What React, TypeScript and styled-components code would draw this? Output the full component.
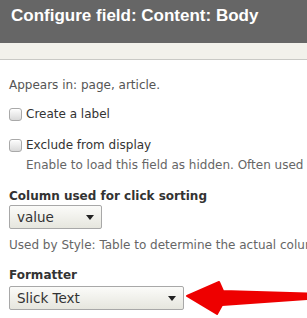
import React from "react";
import styled, { createGlobalStyle } from "styled-components";

const GlobalStyle = createGlobalStyle`
  html, body {
    margin: 0;
    padding: 0;
    background: #fff;
    overflow: hidden;
  }
  body {
    font-family: "DejaVu Sans", Verdana, sans-serif;
  }
`;

const Page = styled.div`
  position: relative;
  width: 307px;
  height: 318px;
  overflow: hidden;
  background: #fff;
`;

const Header = styled.header`
  height: 43px;
  background: #666666;
  padding: 6px 0 0 11px;
  box-sizing: border-box;
`;

const Title = styled.h1`
  margin: 0;
  font-family: "Liberation Sans", Arial, sans-serif;
  font-weight: bold;
  font-size: 17px;
  line-height: 20px;
  color: #fff;
  white-space: nowrap;
`;

const Strip = styled.div`
  height: 16px;
  background: #f2f1eb;
  border-bottom: 1px solid #c9c9c5;
`;

const Main = styled.main`
  padding: 17px 0 0 9px;
  white-space: nowrap;
`;

const Text = styled.p<{ $top: number; $indent?: number; $color?: string }>`
  margin: ${p => p.$top}px 0 0 ${p => p.$indent || 0}px;
  font-size: 12px;
  line-height: 16px;
  color: ${p => p.$color || "#555"};
`;

const CheckRow = styled.label<{ $top: number }>`
  display: flex;
  align-items: center;
  gap: 4px;
  margin-top: ${p => p.$top}px;
  height: 16px;
  font-size: 12px;
  color: #333;
`;

const Box = styled.span`
  width: 11px;
  height: 11px;
  border: 1px solid #a9a9a9;
  border-radius: 3px;
  background: linear-gradient(#fdfdfd, #d9d9d9);
  box-shadow: inset 0 1px 1px rgba(255, 255, 255, 0.8);
`;

const Label = styled.div<{ $top: number }>`
  margin-top: ${p => p.$top}px;
  font-size: 12px;
  line-height: 16px;
  font-weight: bold;
  color: #333;
`;

const Select = styled.div<{ $top: number; $width: number }>`
  display: flex;
  align-items: center;
  justify-content: space-between;
  box-sizing: border-box;
  margin-top: ${p => p.$top}px;
  width: ${p => p.$width}px;
  height: 24px;
  padding: 0 7px 0 7px;
  border: 1px solid #a8a8a8;
  border-radius: 2px;
  background: linear-gradient(#fbfbf9, #e6e6de);
  font-size: 13.5px;
  color: #333;
`;

const Caret = styled.span`
  width: 0;
  height: 0;
  border-left: 4px solid transparent;
  border-right: 4px solid transparent;
  border-top: 5px solid #222;
`;

const Arrow = styled.svg`
  position: absolute;
  left: 185px;
  top: 279px;
`;

export default function App() {
  return (
    <Page>
      <GlobalStyle />
      <Header>
        <Title>Configure field: Content: Body</Title>
      </Header>
      <Strip />
      <Main>
        <Text $top={0}>Appears in: page, article.</Text>
        <CheckRow $top={13}>
          <Box />
          Create a label
        </CheckRow>
        <CheckRow $top={15}>
          <Box />
          Exclude from display
        </CheckRow>
        <Text $top={4} $indent={17} $color="#666">
          Enable to load this field as hidden. Often used to group fields, or to use them as tokens.
        </Text>

        <Label $top={15}>Column used for click sorting</Label>
        <Select $top={1} $width={93}>
          value
          <Caret />
        </Select>
        <Text $top={8} $color="#666">
          Used by Style: Table to determine the actual column to click sort the field on.
        </Text>

        <Label $top={14}>Formatter</Label>
        <Select $top={3} $width={175}>
          Slick Text
          <Caret />
        </Select>
      </Main>

      {/* red callout arrow pointing at the formatter select */}
      <Arrow width="122" height="38" viewBox="0 0 122 38">
        <polygon
          points="2,17 34,3 38,12 122,14.5 122,20 37,26 32,35"
          fill="#ee0000"
          stroke="#ee0000"
          strokeWidth="2"
          strokeLinejoin="round"
        />
      </Arrow>
    </Page>
  );
}
